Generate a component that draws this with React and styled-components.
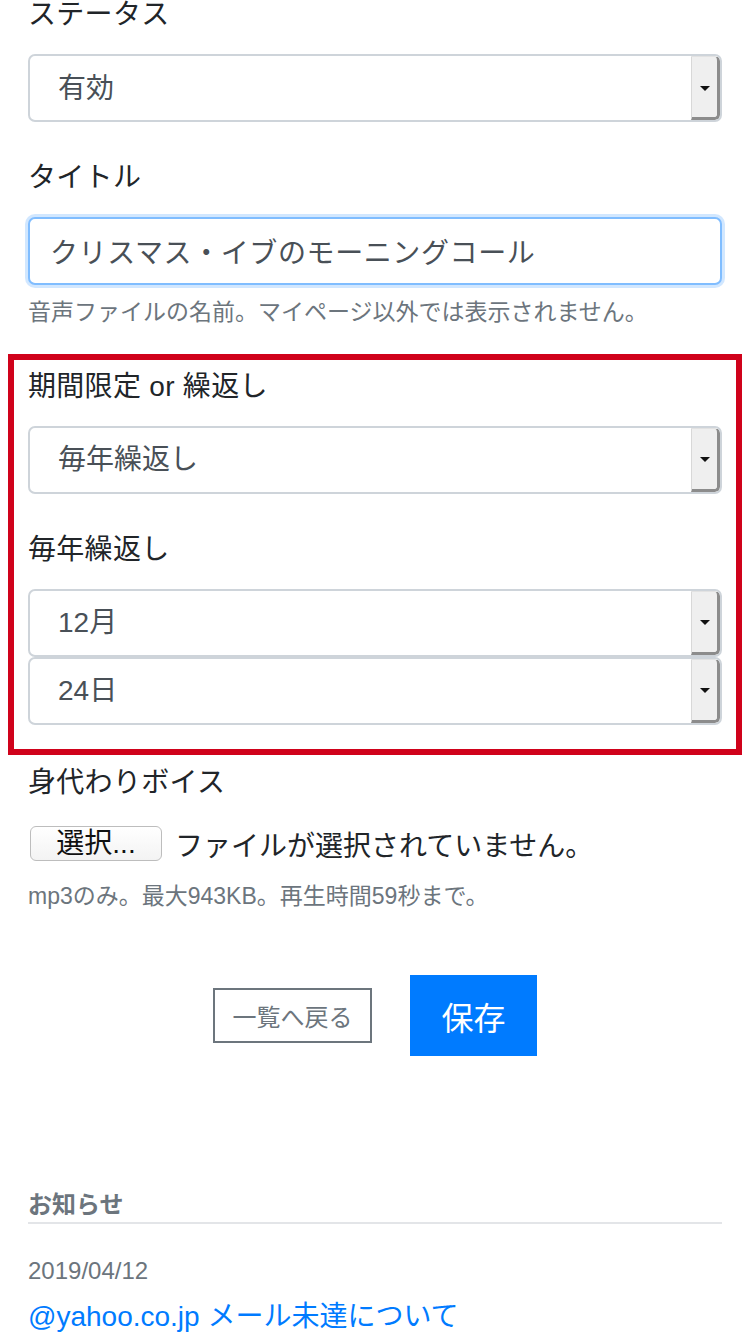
import React from 'react';
import styled, { createGlobalStyle } from 'styled-components';

const GlobalStyle = createGlobalStyle`
  html, body {
    margin: 0;
    padding: 0;
    background: #fff;
  }
  body {
    font-family: "Liberation Sans", "Noto Sans CJK JP", sans-serif;
    color: #212529;
    overflow: hidden;
  }
`;

const Page = styled.div`
  width: 750px;
  box-sizing: border-box;
  padding: 0 28px;
  margin-top: -6px;
`;

const Group = styled.div`
  margin-bottom: ${(p) => p.$gap ?? 35}px;
`;

const Label = styled.div`
  font-size: 28px;
  line-height: 42px;
  color: #212529;
  margin-bottom: 18px;
  letter-spacing: 0.3px;
`;

const SelectBox = styled.div`
  display: flex;
  height: 68px;
  box-sizing: border-box;
  border: 2px solid #ced4da;
  border-radius: 7px;
  background: #fff;
  overflow: hidden;
`;

const NativeSelect = styled.select`
  flex: 1;
  appearance: none;
  -webkit-appearance: none;
  border: none;
  outline: none;
  background: transparent;
  padding: 0 0 0 28px;
  font-family: "Liberation Sans", "Noto Sans CJK JP", sans-serif;
  font-size: 28px;
  color: #495057;
`;

const ArrowBox = styled.span`
  width: 25px;
  display: flex;
  align-items: center;
  justify-content: center;
  background: #efefef;
  border-left: 1px solid #d8d8d8;
  border-right: 3px solid #8c8c8c;
  border-bottom: 3px solid #8c8c8c;
  border-top: 1px solid #e2e2e2;
  border-radius: 0 5px 5px 0;

  &::after {
    content: '';
    border-left: 5px solid transparent;
    border-right: 5px solid transparent;
    border-top: 5px solid #111;
    margin-top: 2px;
  }
`;

const TextInput = styled.input`
  display: block;
  width: 100%;
  height: 68px;
  box-sizing: border-box;
  border: 2px solid #80bdff;
  border-radius: 7px;
  box-shadow: 0 0 0 3px rgba(0, 123, 255, 0.18);
  padding: 0 20px;
  font-family: "Liberation Sans", "Noto Sans CJK JP", sans-serif;
  font-size: 28px;
  letter-spacing: 0.6px;
  color: #495057;
  outline: none;
`;

const Help = styled.div`
  margin-top: ${(p) => p.$top ?? 11}px;
  font-size: 23px;
  line-height: 33.6px;
  color: #6c757d;
`;

const Highlight = styled.div`
  margin: 0 -20px 7px;
  border: 6px solid #d0021b;
  padding: 6px 14px 24px;
`;

const Stack = styled.div`
  display: flex;
  flex-direction: column;
`;

const FileRow = styled.div`
  display: flex;
  align-items: center;
  height: 44px;
  margin-top: 8px;
  font-size: 28px;
  color: #212529;
`;

const FileButton = styled.button`
  height: 35px;
  width: 132px;
  margin-left: 2px;
  margin-right: 13px;
  padding: 0;
  box-sizing: border-box;
  border: 1px solid #bdbdbd;
  border-radius: 6px;
  background: linear-gradient(#ffffff, #f3f3f3);
  font-family: "Liberation Sans", "Noto Sans CJK JP", sans-serif;
  font-size: 28px;
  line-height: 33px;
  color: #111;
`;

const Actions = styled.div`
  display: flex;
  justify-content: center;
  align-items: center;
  gap: 38px;
  margin-top: 62px;
`;

const BackButton = styled.button`
  width: 159px;
  height: 55px;
  box-sizing: border-box;
  border: 2px solid #6c757d;
  border-radius: 0;
  background: #fff;
  color: #6c757d;
  font-family: "Liberation Sans", "Noto Sans CJK JP", sans-serif;
  font-size: 24px;
  padding: 0;
`;

const SaveButton = styled.button`
  width: 127px;
  height: 81px;
  box-sizing: border-box;
  border: none;
  border-radius: 0;
  background: #007bff;
  color: #fff;
  font-family: "Liberation Sans", "Noto Sans CJK JP", sans-serif;
  font-size: 32px;
  padding: 0;
`;

const NewsHeading = styled.div`
  margin-top: 132px;
  font-size: 24px;
  line-height: 34px;
  font-weight: 700;
  color: #6c757d;
  border-bottom: 2px solid #e3e5e8;
`;

const NewsDate = styled.div`
  margin-top: 29px;
  font-size: 24px;
  line-height: 36px;
  color: #6c757d;
`;

const NewsLink = styled.a`
  display: block;
  margin-top: 7px;
  font-size: 28px;
  line-height: 42px;
  color: #007bff;
  text-decoration: none;
`;

const Select = ({ value }) => (
  <SelectBox>
    <NativeSelect defaultValue={value}>
      <option>{value}</option>
    </NativeSelect>
    <ArrowBox />
  </SelectBox>
);

const App = () => {
  return (
    <>
      <GlobalStyle />
      <Page>
        <Group>
          <Label>ステータス</Label>
          <Select value="有効" />
        </Group>

        <Group $gap={24}>
          <Label>タイトル</Label>
          <TextInput defaultValue="クリスマス・イブのモーニングコール" />
          <Help>音声ファイルの名前。マイページ以外では表示されません。</Help>
        </Group>

        <Highlight>
          <Group>
            <Label>期間限定 or 繰返し</Label>
            <Select value="毎年繰返し" />
          </Group>
          <Group $gap={0}>
            <Label>毎年繰返し</Label>
            <Stack>
              <Select value="12月" />
              <Select value="24日" />
            </Stack>
          </Group>
        </Highlight>

        <Group $gap={0}>
          <Label>身代わりボイス</Label>
          <FileRow>
            <FileButton>選択...</FileButton>
            ファイルが選択されていません。
          </FileRow>
          <Help $top={14}>mp3のみ。最大943KB。再生時間59秒まで。</Help>
        </Group>

        <Actions>
          <BackButton>一覧へ戻る</BackButton>
          <SaveButton>保存</SaveButton>
        </Actions>

        <NewsHeading>お知らせ</NewsHeading>
        <NewsDate>2019/04/12</NewsDate>
        <NewsLink href="#">@yahoo.co.jp メール未達について</NewsLink>
      </Page>
    </>
  );
};

export default App;
